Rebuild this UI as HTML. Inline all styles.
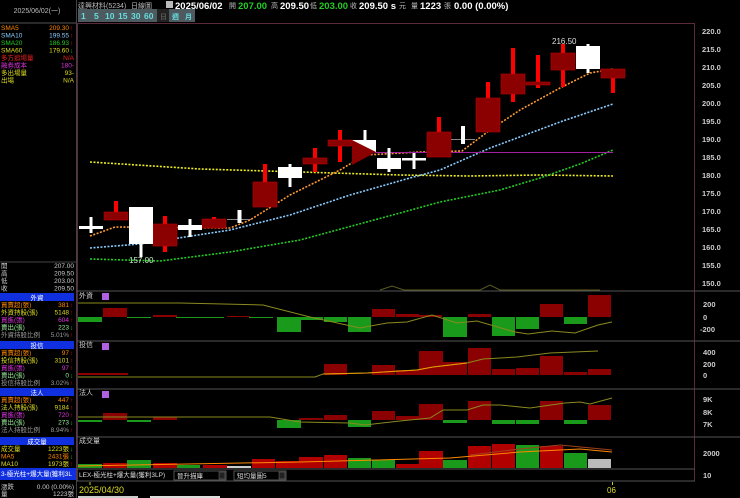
<!DOCTYPE html>
<html><head><meta charset="utf-8"><style>
html,body{margin:0;padding:0;background:#000;width:740px;height:498px;overflow:hidden}
svg{display:block}
text{font-family:"Liberation Sans","Noto Sans CJK TC",sans-serif}
</style></head><body>
<svg width="740" height="498" viewBox="0 0 740 498" xmlns="http://www.w3.org/2000/svg">
<rect width="740" height="498" fill="#000"/>
<!-- header -->
<g font-size="7" fill="#bbb">
<text x="78" y="8">達興材料(5234)</text>
<text x="131" y="8">日線圖</text>
<rect x="166" y="1" width="7" height="7" fill="#bbb"/>
<text x="175" y="9" font-weight="bold" font-size="9.5" fill="#fff">2025/06/02</text>
<text x="229" y="8">開</text><text x="238" y="9" font-weight="bold" font-size="9.5" fill="#2c2">207.00</text>
<text x="271" y="8">高</text><text x="280" y="9" font-weight="bold" font-size="9.5" fill="#fff">209.50</text>
<text x="310" y="8">低</text><text x="319" y="9" font-weight="bold" font-size="9.5" fill="#2c2">203.00</text>
<text x="350" y="8">收</text><text x="359" y="9" font-weight="bold" font-size="9.5" fill="#fff">209.50 s</text>
<text x="399" y="8">元</text><text x="411" y="8">量</text><text x="420" y="9" font-weight="bold" font-size="9.5" fill="#fff">1223</text>
<text x="444" y="8">張</text><text x="454" y="9" font-weight="bold" font-size="9.5" fill="#fff">0.00 (0.00%)</text>
</g>
<!-- buttons -->
<rect x="78" y="9" width="117" height="13" fill="#4d5a5f"/>
<rect x="157" y="9" width="12" height="13" fill="#222"/>
<g font-size="8.5" fill="#6dd" font-weight="bold">
<text x="81" y="19">1</text><text x="94" y="19">5</text><text x="105" y="19">10</text><text x="118" y="19">15</text><text x="131" y="19">30</text><text x="144" y="19">60</text>
<text x="160" y="19" fill="#555" font-size="7">日</text><text x="172" y="19" font-size="7">週</text><text x="185" y="19" font-size="7">月</text>
</g>
<!-- left panel -->
<text x="37" y="13" font-size="7" fill="#bbb" text-anchor="middle">2025/06/02(一)</text>
<line x1="0" y1="23" x2="76" y2="23" stroke="#555"/>
<line x1="76.5" y1="0" x2="76.5" y2="498" stroke="#444"/>
<g font-size="6.5" >
<text x="1" y="30" fill="#f80">SMA5</text><text x="69" y="30" fill="#f80" text-anchor="end">209.30</text><text x="70" y="30" fill="#f00">↑</text>
<text x="1" y="37.5" fill="#8cf">SMA10</text><text x="69" y="37.5" fill="#8cf" text-anchor="end">199.55</text><text x="70" y="37.5" fill="#f00">↑</text>
<text x="1" y="45" fill="#2c2">SMA20</text><text x="69" y="45" fill="#2c2" text-anchor="end">186.93</text><text x="70" y="45" fill="#f00">↑</text>
<text x="1" y="52.5" fill="#dd2">SMA60</text><text x="69" y="52.5" fill="#dd2" text-anchor="end">179.60</text><text x="70" y="52.5" fill="#2c2">↓</text>
<text x="1" y="60" fill="#e22">多方追場量</text><text x="74" y="60" fill="#e22" text-anchor="end">N/A</text>
<text x="1" y="67.5" fill="#d3d">融券成本</text><text x="74" y="67.5" fill="#d3d" text-anchor="end">180-</text>
<text x="1" y="75" fill="#dd2">多出場量</text><text x="74" y="75" fill="#dd2" text-anchor="end">93-</text>
<text x="1" y="82.5" fill="#dd2">出場</text><text x="74" y="82.5" fill="#dd2" text-anchor="end">N/A</text>
</g>
<line x1="0" y1="262" x2="76" y2="262" stroke="#444"/>
<g font-size="6.5" fill="#ccc">
<text x="1" y="268">開</text><text x="74" y="268" text-anchor="end">207.00</text>
<text x="1" y="275.5">高</text><text x="74" y="275.5" text-anchor="end">209.50</text>
<text x="1" y="283">低</text><text x="74" y="283" text-anchor="end">203.00</text>
<text x="1" y="290.5">收</text><text x="74" y="290.5" text-anchor="end">209.50</text>
</g>
<!-- sections -->
<g font-size="6.5">
<rect x="0" y="293" width="74" height="8" fill="#1030e0"/><text x="37" y="300" fill="#fff" text-anchor="middle">外資</text>
<text x="1" y="307" fill="#f80">買賣超(張)</text><text x="69" y="307" fill="#f80" text-anchor="end">381</text><text x="70" y="307" fill="#f00">↑</text>
<text x="1" y="314.5" fill="#dd2">外資持股(張)</text><text x="69" y="314.5" fill="#dd2" text-anchor="end">5148</text><text x="70" y="314.5" fill="#f00">↑</text>
<text x="1" y="322" fill="#d3d">買進(張)</text><text x="69" y="322" fill="#d3d" text-anchor="end">604</text><text x="70" y="322" fill="#f00">↑</text>
<text x="1" y="329.5" fill="#9e9">賣出(張)</text><text x="69" y="329.5" fill="#9e9" text-anchor="end">223</text><text x="70" y="329.5" fill="#2c2">↓</text>
<text x="1" y="337" fill="#999">外資持股比例</text><text x="69" y="337" fill="#999" text-anchor="end">5.01%</text><text x="70" y="337" fill="#f00">↑</text>

<rect x="0" y="341" width="74" height="8" fill="#1030e0"/><text x="37" y="348" fill="#fff" text-anchor="middle">投信</text>
<text x="1" y="355" fill="#f80">買賣超(張)</text><text x="69" y="355" fill="#f80" text-anchor="end">97</text><text x="70" y="355" fill="#f00">↑</text>
<text x="1" y="362.5" fill="#dd2">投信持股(張)</text><text x="69" y="362.5" fill="#dd2" text-anchor="end">3101</text><text x="70" y="362.5" fill="#f00">↑</text>
<text x="1" y="370" fill="#d3d">買進(張)</text><text x="69" y="370" fill="#d3d" text-anchor="end">97</text><text x="70" y="370" fill="#f00">↑</text>
<text x="1" y="377.5" fill="#9e9">賣出(張)</text><text x="69" y="377.5" fill="#9e9" text-anchor="end">0</text><text x="70" y="377.5" fill="#2c2">↓</text>
<text x="1" y="385" fill="#999">投信持股比例</text><text x="69" y="385" fill="#999" text-anchor="end">3.02%</text><text x="70" y="385" fill="#f00">↑</text>

<rect x="0" y="388" width="74" height="8" fill="#1030e0"/><text x="37" y="395" fill="#fff" text-anchor="middle">法人</text>
<text x="1" y="402" fill="#f80">買賣超(張)</text><text x="69" y="402" fill="#f80" text-anchor="end">447</text><text x="70" y="402" fill="#f00">↑</text>
<text x="1" y="409.5" fill="#dd2">法人持股(張)</text><text x="69" y="409.5" fill="#dd2" text-anchor="end">9184</text><text x="70" y="409.5" fill="#f00">↑</text>
<text x="1" y="417" fill="#d3d">買進(張)</text><text x="69" y="417" fill="#d3d" text-anchor="end">720</text><text x="70" y="417" fill="#f00">↑</text>
<text x="1" y="424.5" fill="#9e9">賣出(張)</text><text x="69" y="424.5" fill="#9e9" text-anchor="end">273</text><text x="70" y="424.5" fill="#2c2">↓</text>
<text x="1" y="432" fill="#999">法人持股比例</text><text x="69" y="432" fill="#999" text-anchor="end">8.94%</text><text x="70" y="432" fill="#f00">↑</text>

<rect x="0" y="437" width="74" height="8" fill="#1030e0"/><text x="37" y="444" fill="#fff" text-anchor="middle">成交量</text>
<text x="1" y="451" fill="#dd2">成交量</text><text x="69" y="451" fill="#dd2" text-anchor="end">1223張</text><text x="70" y="451" fill="#2c2">↓</text>
<text x="1" y="458.5" fill="#f80">MA5</text><text x="69" y="458.5" fill="#f80" text-anchor="end">2431張</text><text x="70" y="458.5" fill="#2c2">↓</text>
<text x="1" y="466" fill="#dd2">MA10</text><text x="69" y="466" fill="#dd2" text-anchor="end">1973張</text><text x="70" y="466" fill="#f00">↑</text>

<rect x="0" y="468" width="76" height="12" fill="#1030e0"/><text x="1" y="476" fill="#fff">3-極光柱+爆大量(獲利3L</text>
<text x="1" y="489" fill="#ccc">漲跌</text><text x="74" y="489" fill="#ccc" text-anchor="end">0.00 (0.00%)</text>
<text x="1" y="496" fill="#ccc">量</text><text x="74" y="496" fill="#ccc" text-anchor="end">1223張</text>
</g>

<!-- main chart frame -->
<line x1="77" y1="23.5" x2="695" y2="23.5" stroke="#5a2a3a"/>
<line x1="694.5" y1="23" x2="694.5" y2="481" stroke="#5a2a3a"/>
<line x1="77.5" y1="23" x2="77.5" y2="481" stroke="#5a2a3a"/>
<g stroke="#555"><line x1="77" y1="291" x2="740" y2="291"/><line x1="77" y1="341" x2="740" y2="341"/><line x1="77" y1="389" x2="740" y2="389"/><line x1="77" y1="437" x2="740" y2="437"/><line x1="77" y1="469" x2="695" y2="469"/><line x1="77" y1="481" x2="695" y2="481"/></g>

<!-- price axis -->
<g font-size="7.5" fill="#ccc" font-weight="bold">
<text x="702" y="34">220.0</text><text x="702" y="52">215.0</text><text x="702" y="70">210.0</text><text x="702" y="88">205.0</text>
<text x="702" y="106">200.0</text><text x="702" y="124">195.0</text><text x="702" y="142">190.0</text><text x="702" y="160">185.0</text>
<text x="702" y="178">180.0</text><text x="702" y="196">175.0</text><text x="702" y="214">170.0</text><text x="702" y="232">165.0</text>
<text x="702" y="250">160.0</text><text x="702" y="268">155.0</text><text x="702" y="286">150.0</text>
<text x="703" y="307">200</text><text x="703" y="320">0</text><text x="700" y="332">-200</text>
<text x="703" y="355">400</text><text x="703" y="367">200</text><text x="703" y="378">0</text>
<text x="703" y="402">9K</text><text x="703" y="415">8K</text><text x="703" y="427">7K</text>
<text x="703" y="456">2000</text><text x="703" y="478">10</text>
</g>

<!-- MAs -->
<g fill="none" stroke-width="1.6" stroke-dasharray="2 1.5">
<polyline stroke="#ee2" points="90,162 200,169 300,172 400,175 470,176 540,175 613,176"/>
<polyline stroke="#2c2" points="90,259 160,261 230,252 300,240 400,213 440,202 500,190 540,178 580,164 613,150"/>
<polyline stroke="#8cf" points="90,248 140,244 230,230 290,215 350,195 410,178 440,170 490,148 560,122 613,104"/>
<polyline stroke="#f93" points="90,236 115,227 230,228 250,220 290,195 340,170 365,155 420,152 462,151 490,130 520,110 560,88 590,73 613,69"/>
</g>
<line x1="375" y1="152.5" x2="613" y2="152.5" stroke="#a020a0" stroke-width="1"/>

<!-- candles -->
<g fill="#f00">
<rect x="114" y="201" width="4" height="11"/><rect x="163" y="216" width="4" height="36"/><rect x="212" y="217" width="4" height="3"/>
<rect x="263" y="164" width="4" height="18"/><rect x="313" y="148" width="4" height="24"/><rect x="338" y="130" width="4" height="32"/>
<rect x="437" y="117" width="4" height="15"/><rect x="486" y="82" width="4" height="16"/><rect x="511" y="48" width="4" height="54"/>
<rect x="536" y="55" width="4" height="33"/><rect x="561" y="44" width="4" height="43"/><rect x="611" y="69" width="4" height="24"/>
</g>
<g fill="#fff">
<rect x="89.5" y="217" width="3" height="16"/><rect x="139.5" y="244" width="3" height="13"/><rect x="188.5" y="219" width="3" height="18"/>
<rect x="288.5" y="164" width="3" height="23"/><rect x="363.5" y="130" width="3" height="10"/><rect x="387.5" y="148" width="3" height="24"/>
<rect x="412.5" y="153" width="3" height="16"/><rect x="586.5" y="44" width="3" height="29"/>
</g>
<g fill="#8b0000" stroke="#b00" stroke-width="0.6">
<rect x="104" y="212" width="24" height="8"/><rect x="153" y="224" width="24" height="22"/><rect x="202" y="219" width="24" height="9"/>
<rect x="253" y="182" width="24" height="25"/><rect x="303" y="158" width="24" height="6"/><rect x="328" y="140" width="24" height="6"/>
<rect x="427" y="132" width="24" height="25"/><rect x="476" y="98" width="24" height="34"/><rect x="501" y="74" width="24" height="20"/>
<rect x="526" y="82" width="24" height="3"/><rect x="551" y="53" width="24" height="17"/><rect x="601" y="69" width="24" height="9"/>
</g>
<g fill="#fff">
<rect x="79" y="226" width="24" height="3"/><rect x="129" y="207" width="24" height="37"/><rect x="178" y="225" width="24" height="5"/>
<rect x="278" y="167" width="24" height="11"/><rect x="352" y="140" width="24" height="12"/><rect x="377" y="158" width="24" height="11"/>
<rect x="402" y="158" width="24" height="2.5"/><rect x="576" y="46" width="24" height="23"/>
</g>
<polygon points="352,140 376,152 352,165" fill="#8b0000"/>
<line x1="227" y1="219.5" x2="251" y2="219.5" stroke="#888"/><rect x="237.5" y="210" width="4" height="13" fill="#fff"/>
<line x1="451" y1="139.5" x2="475" y2="139.5" stroke="#888"/><rect x="461" y="126" width="4" height="18" fill="#fff"/>
<text x="552" y="44" font-size="8" fill="#ddd">216.50</text>
<text x="129" y="263" font-size="8" fill="#cec">157.00</text>
<polyline points="380,290 392,286 404,290 480,290 490,285 500,290 600,290" fill="none" stroke="#5a5a20"/>

<!-- panel labels -->
<g font-size="7" fill="#ccc">
<text x="79" y="298">外資</text><rect x="102" y="293" width="7" height="7" fill="#b060e0"/>
<text x="79" y="347">投信</text><rect x="102" y="343" width="7" height="7" fill="#b060e0"/>
<text x="79" y="395">法人</text><rect x="102" y="391" width="7" height="7" fill="#b060e0"/>
<text x="79" y="443">成交量</text>
</g>

<!-- panel 1 bars -->
<g fill="#1a9a1a">
<rect x="78" y="317" width="24" height="5"/><rect x="127" y="317" width="24" height="1"/><rect x="176" y="317" width="24" height="1"/><rect x="200" y="317" width="24" height="1"/><rect x="249" y="317" width="24" height="1"/>
<rect x="277" y="317" width="24" height="15"/><rect x="299" y="317" width="24" height="3"/><rect x="324" y="317" width="23" height="5"/><rect x="348" y="317" width="23" height="15"/>
<rect x="443" y="317" width="24" height="20"/><rect x="492" y="317" width="23" height="19"/><rect x="516" y="317" width="23" height="12"/><rect x="564" y="317" width="23" height="7"/>
</g>
<g fill="#8b0000">
<rect x="103" y="308" width="24" height="9"/><rect x="153" y="315" width="24" height="2"/><rect x="227" y="316" width="23" height="1"/>
<rect x="372" y="309" width="23" height="8"/><rect x="396" y="314" width="23" height="3"/><rect x="419" y="315" width="23" height="2"/>
<rect x="468" y="314" width="23" height="3"/><rect x="540" y="304" width="23" height="13"/><rect x="588" y="295" width="23" height="22"/>
</g>
<polyline points="78,303 180,303 263,305 310,317 360,328 387,323 407,322 432,315 457,323 477,321 515,332 528,334 552,331 575,333 598,325 612,322" fill="none" stroke="#8a8a20" stroke-width="1"/>

<!-- panel 2 bars -->
<g fill="#8b0000">
<rect x="78" y="373" width="50" height="2"/>
<rect x="324" y="364" width="23" height="11"/><rect x="372" y="365" width="23" height="10"/><rect x="396" y="370" width="23" height="5"/>
<rect x="419" y="351" width="24" height="24"/><rect x="443" y="362" width="24" height="13"/><rect x="468" y="348" width="23" height="27"/>
<rect x="492" y="369" width="23" height="6"/><rect x="516" y="368" width="23" height="7"/><rect x="540" y="356" width="23" height="19"/>
<rect x="564" y="372" width="23" height="3"/><rect x="588" y="369" width="23" height="6"/>
</g>
<polyline points="78,377 315,377 323,374 367,373 417,370 433,367 467,363 483,359 517,357 550,353 598,351" fill="none" stroke="#8a8a20" stroke-width="1"/>
<polyline points="323,374 367,373 417,370 433,367 467,363" fill="none" stroke="#e90" stroke-width="1"/>

<!-- panel 3 bars -->
<g fill="#1a9a1a">
<rect x="78" y="420" width="24" height="2"/><rect x="127" y="420" width="24" height="2"/>
<rect x="277" y="420" width="24" height="8"/><rect x="348" y="420" width="23" height="7"/><rect x="443" y="420" width="24" height="3"/>
<rect x="492" y="420" width="23" height="4"/><rect x="516" y="420" width="23" height="4"/><rect x="564" y="420" width="23" height="4"/>
</g>
<g fill="#8b0000">
<rect x="103" y="413" width="24" height="7"/><rect x="153" y="417" width="24" height="3"/>
<rect x="299" y="418" width="24" height="2"/><rect x="324" y="415" width="23" height="5"/><rect x="372" y="411" width="23" height="9"/>
<rect x="396" y="416" width="23" height="4"/><rect x="419" y="404" width="24" height="16"/><rect x="468" y="401" width="23" height="19"/>
<rect x="540" y="401" width="23" height="19"/><rect x="588" y="405" width="23" height="15"/>
</g>
<polyline points="78,417 270,417 300,422 350,423 365,425 400,421 430,418 443,410 467,410 483,405 500,405 520,407 530,408 565,403 580,402 590,404 612,398" fill="none" stroke="#8a8a20" stroke-width="1"/>

<!-- panel 4 bars -->
<g fill="#1a9a1a">
<rect x="78" y="464" width="24" height="4"/><rect x="127" y="460" width="24" height="8"/><rect x="176" y="465" width="24" height="3"/>
<rect x="348" y="458" width="23" height="10"/><rect x="372" y="460" width="23" height="8"/><rect x="443" y="460" width="24" height="8"/>
<rect x="516" y="445" width="23" height="23"/><rect x="564" y="453" width="23" height="15"/>
</g>
<g fill="#b00000">
<rect x="103" y="463" width="24" height="5"/><rect x="153" y="463" width="24" height="5"/><rect x="203" y="465" width="24" height="3"/>
<rect x="252" y="459" width="23" height="9"/><rect x="276" y="461" width="23" height="7"/><rect x="299" y="457" width="24" height="11"/>
<rect x="324" y="455" width="23" height="13"/><rect x="396" y="464" width="23" height="4"/><rect x="419" y="451" width="24" height="17"/>
<rect x="468" y="446" width="23" height="22"/><rect x="492" y="444" width="23" height="24"/><rect x="540" y="446" width="23" height="22"/>
</g>
<rect x="227" y="466" width="24" height="2" fill="#ccc"/><rect x="588" y="459" width="23" height="9" fill="#bbb"/>
<polyline points="78,466 300,462 450,458 520,452 580,449 612,452" fill="none" stroke="#f80" stroke-width="1"/>
<polyline points="470,455 520,449 560,445 612,450" fill="none" stroke="#a04020" stroke-width="1"/>

<!-- strip -->
<g font-size="6.5" fill="#ddd">
<text x="79" y="477">LEX-極光柱+爆大量(獲利3LP)</text>
<rect x="174" y="471" width="52" height="9" fill="#000" stroke="#888" stroke-width="0.6"/><text x="177" y="478">晉升描庫</text><rect x="219" y="472" width="6" height="7" fill="#222" stroke="#777" stroke-width="0.5"/>
<rect x="234" y="471" width="52" height="9" fill="#000" stroke="#888" stroke-width="0.6"/><text x="237" y="478">短均量圖5</text><rect x="279" y="472" width="6" height="7" fill="#222" stroke="#777" stroke-width="0.5"/>
</g>
<line x1="90" y1="482" x2="90" y2="485" stroke="#cc2"/><line x1="612.5" y1="482" x2="612.5" y2="485" stroke="#cc2"/>
<text x="79" y="493" font-size="9" fill="#dd2">2025/04/30</text>
<text x="607" y="493" font-size="8" fill="#dd2">06</text>
<rect x="78" y="496" width="60" height="2" fill="#ccc"/><rect x="150" y="496" width="70" height="2" fill="#ddd"/>
</svg>
</body></html>
